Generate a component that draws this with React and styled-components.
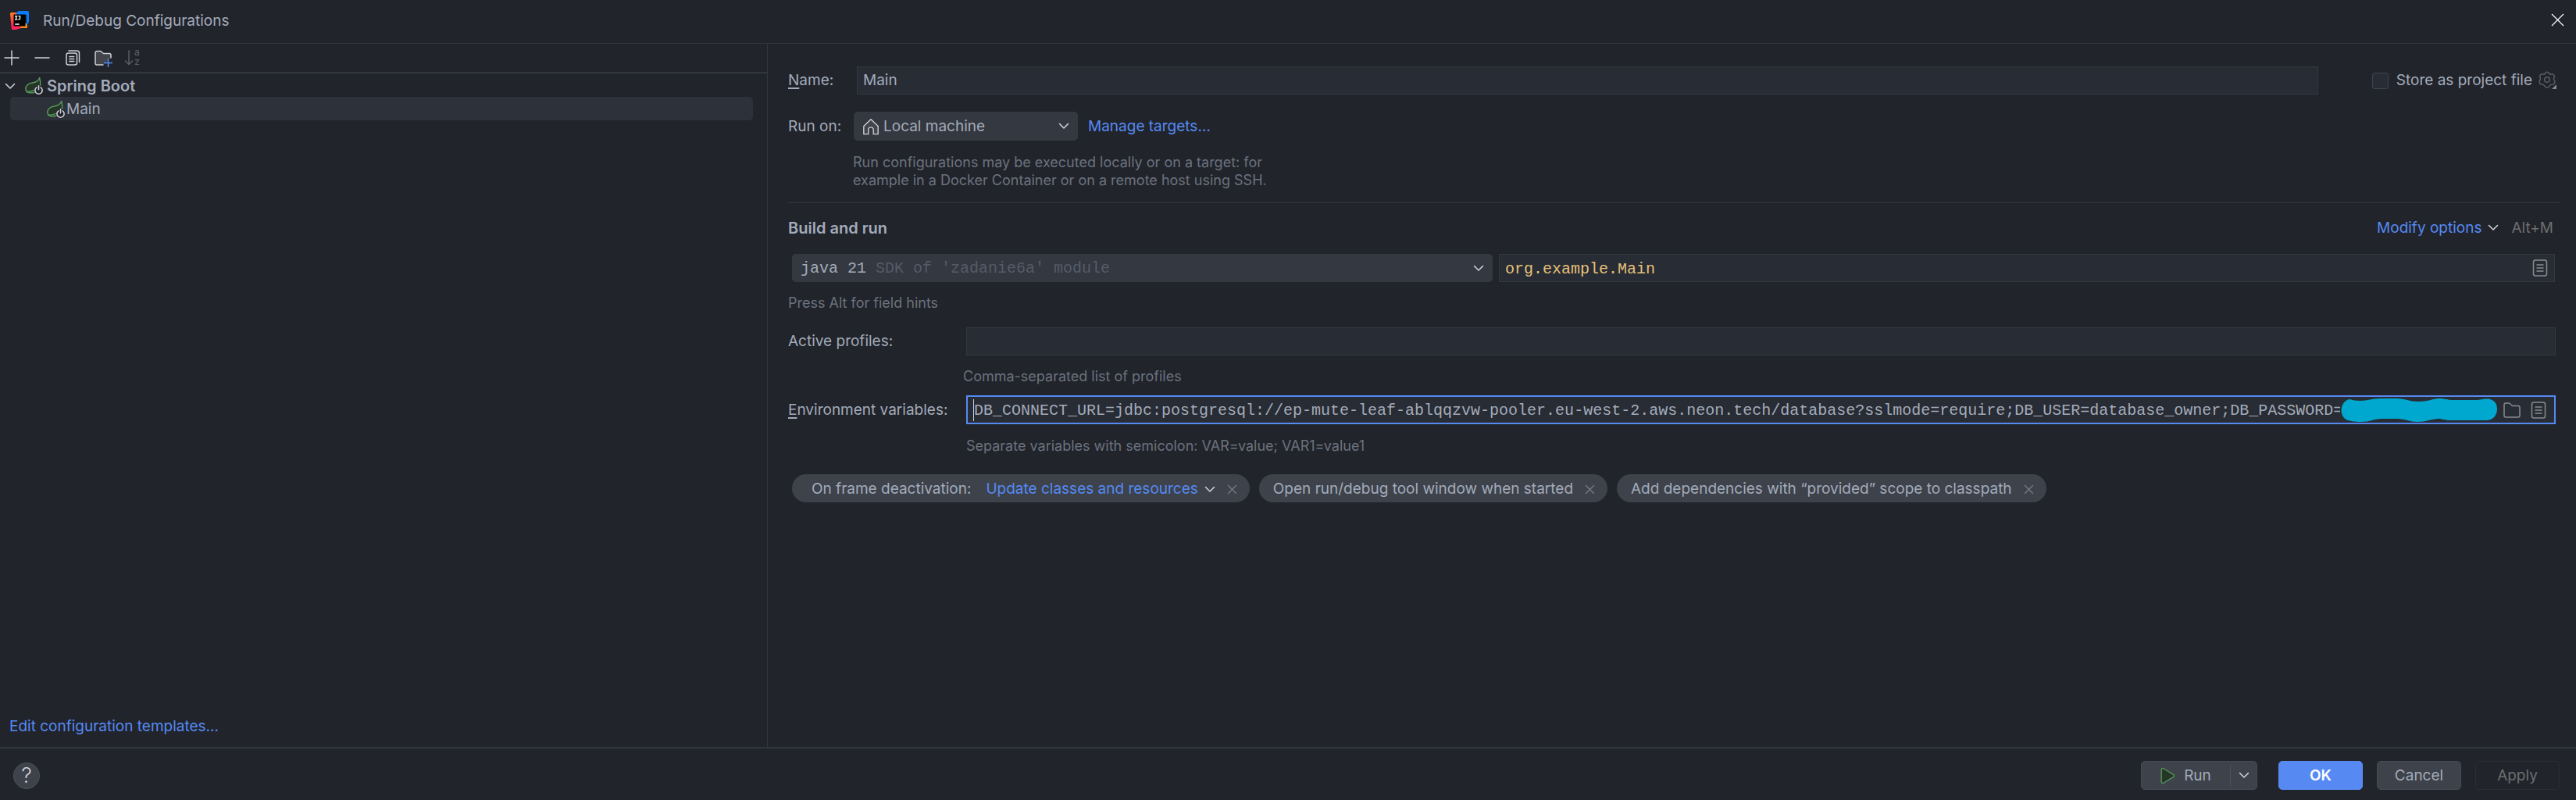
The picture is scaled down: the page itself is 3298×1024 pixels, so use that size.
import React from "react";
import styled, { createGlobalStyle } from "styled-components";

const color = {
  bg: "#21242b",
  line: "#32363e",
  field: "#282c34",
  fieldLine: "#333841",
  control: "#343840",
  chip: "#3d424b",
  selected: "#2d3139",
  text: "#a3abba",
  icon: "#ced0d6",
  muted: "#6c727e",
  faint: "#545b68",
  disabled: "#6e6e6e",
  link: "#568af2",
  accent: "#568af2",
  code: "#e5c07b",
  green: "#57965c",
};

const sans = `Inter, "Liberation Sans", sans-serif`;
const mono = `"Liberation Mono", "DejaVu Sans Mono", monospace`;

const GlobalStyle = createGlobalStyle`
  * { box-sizing: border-box; }
  body {
    margin: 0;
    background: ${color.bg};
    color: ${color.text};
    font: 19px/24px ${sans};
  }
  button, input, select {
    margin: 0;
    padding: 0;
    border: 0;
    background: none;
    color: inherit;
    font: inherit;
    outline: none;
  }
  svg { display: block; flex: none; }
`;

/* ---------- window frame ---------- */

const Dialog = styled.div`
  display: flex;
  flex-direction: column;
  min-height: 100vh;
`;

const TitleBar = styled.header`
  display: flex;
  align-items: center;
  gap: 18px;
  height: 56px;
  padding: 0 15px 4px 13px;
  border-bottom: 1px solid ${color.line};
`;

const Title = styled.h1`
  flex: 1;
  margin: 0;
  padding-top: 2px;
  font-size: 19px;
  font-weight: 400;
`;

const Body = styled.main`
  flex: 1;
  display: grid;
  grid-template-columns: 983px 1fr;
`;

const IconButton = styled.button`
  display: flex;
  align-items: center;
  justify-content: center;
  flex: none;
`;

/* ---------- sidebar ---------- */

const Sidebar = styled.aside`
  display: flex;
  flex-direction: column;
  border-right: 1px solid ${color.line};
`;

const Toolbar = styled.div`
  display: flex;
  align-items: center;
  gap: 15px;
  height: 38px;
  padding-left: 3px;
  border-bottom: 2px solid ${color.line};
`;

const Tree = styled.ul`
  flex: 1;
  margin: 0;
  padding: 0 18px 0 13px;
  list-style: none;
`;

const TreeRow = styled.li`
  display: flex;
  align-items: center;
  gap: ${(p) => (p.$leaf ? 2 : 5)}px;
  height: 30px;
  margin-left: ${(p) => (p.$leaf ? 0 : -9)}px;
  padding-top: 2px;
  padding-left: ${(p) => (p.$leaf ? 46 : 0)}px;
  border-radius: 5px;
  background: ${(p) => (p.$selected ? color.selected : "transparent")};
  font-size: ${(p) => (p.$leaf ? 19 : 20)}px;
  font-weight: ${(p) => (p.$leaf ? 400 : 600)};
`;

const TreeToggle = styled(IconButton)`
  width: 17px;
  margin-right: 5px;
`;

const Link = styled.a`
  color: ${color.link};
  text-decoration: none;
`;

const SidebarFooter = styled.div`
  padding: 0 12px 14px;
`;

/* ---------- form ---------- */

const Form = styled.form`
  display: flex;
  flex-direction: column;
  min-width: 0;
  padding: 29px 21px 0 26px;
`;

const Row = styled.div`
  display: flex;
  align-items: center;
  margin-bottom: ${(p) => p.$after || 0}px;
`;

const Label = styled.label`
  flex: none;
  width: ${(p) => p.$width}px;
  u {
    text-decoration-thickness: 2px;
    text-underline-offset: 3px;
  }
`;

const Field = styled.div`
  flex: 1;
  display: flex;
  align-items: center;
  min-width: 0;
  height: ${(p) => (p.$focused ? 37 : 36)}px;
  margin-left: ${(p) => p.$inset || 0}px;
  margin-right: ${(p) => p.$end || 0}px;
  padding: 0 ${(p) => (p.$focused ? 8 : 6)}px 0 7px;
  border: ${(p) => (p.$focused ? `2px solid ${color.accent}` : `1px solid ${color.fieldLine}`)};
  background: ${color.field};
`;

const TextInput = styled.input`
  flex: 1;
  min-width: 0;
  width: 0;
  height: ${(p) => (p.$mono ? 28 : 24)}px;
  padding-top: ${(p) => (p.$mono ? 2 : 0)}px;
  color: ${(p) => p.$color || color.text};
  font-family: ${(p) => (p.$mono ? mono : sans)};
  font-size: ${(p) => (p.$mono ? 20 : 19)}px;
`;

const Caret = styled.span`
  width: 1px;
  height: 28px;
  background: ${color.icon};
`;

const FieldIcon = styled(IconButton)`
  width: 24px;
  height: 24px;
  margin-left: ${(p) => p.$before || 0}px;
  margin-right: ${(p) => p.$after || 0}px;
`;

const SelectBox = styled.div`
  flex: ${(p) => (p.$width ? "none" : "0 1 897px")};
  width: ${(p) => (p.$width ? `${p.$width}px` : "auto")};
  display: flex;
  align-items: center;
  height: ${(p) => (p.$width ? 37 : 36)}px;
  padding: 0 11px;
  border-radius: 5px;
  background: ${color.control};
`;

const Select = styled.select`
  appearance: none;
  field-sizing: content;
  flex: ${(p) => (p.$fill ? 1 : "none")};
  margin-left: ${(p) => (p.$fill ? 5 : 0)}px;
  padding-top: ${(p) => (p.$mono ? 2 : 0)}px;
  font-family: ${(p) => (p.$mono ? mono : sans)};
  font-size: ${(p) => (p.$mono ? 20 : 19)}px;
  option { background: ${color.control}; }
`;

const SelectHint = styled.span`
  flex: 1;
  margin-left: 12px;
  padding-top: 2px;
  color: ${color.faint};
  font: 20px/24px ${mono};
`;

const Hint = styled.p`
  max-width: ${(p) => p.$max || 900}px;
  margin: 0 0 ${(p) => p.$after}px ${(p) => p.$indent || 0}px;
  color: ${color.muted};
  font-size: 18px;
  line-height: 23px;
`;

const Divider = styled.hr`
  width: 100%;
  height: 1px;
  margin: 0;
  border: 0;
  background: ${color.line};
`;

const SectionTitle = styled.h2`
  flex: 1;
  margin: 0;
  font-size: 20px;
  font-weight: 600;
`;

const ModifyButton = styled.button`
  display: flex;
  align-items: center;
  gap: 8px;
  color: ${color.link};
`;

const Shortcut = styled.span`
  margin: 0 8px 0 16px;
  color: ${color.disabled};
`;

const CheckLabel = styled.label`
  display: flex;
  align-items: center;
  gap: 10px;
`;

const Checkbox = styled.input`
  appearance: none;
  width: 21px;
  height: 21px;
  border: 1px solid #3e4654;
  border-radius: 3px;
  background: ${color.field};
`;

const TargetLink = styled(Link)`
  margin-left: 13px;
`;

const SectionRow = styled(Row)`
  height: 63px;
`;

const JavaRow = styled(Row)`
  gap: 8px;
  padding: 0 6px 0 5px;
`;

const Chips = styled.div`
  display: flex;
  flex-wrap: wrap;
  gap: 12px;
  padding-left: 5px;
`;

const Chip = styled.div`
  display: flex;
  align-items: center;
  height: 36px;
  padding: 2px 16px 0 ${(p) => (p.$wide ? 25 : 18)}px;
  border-radius: 18px;
  background: ${color.chip};
`;

const ChipSelect = styled.span`
  display: flex;
  align-items: center;
  gap: 8px;
  margin-left: 19px;
  color: ${color.link};
`;

const ChipClose = styled(IconButton)`
  margin-left: 15px;
`;

/* ---------- footer ---------- */

const Footer = styled.footer`
  display: flex;
  align-items: center;
  gap: 18px;
  height: 68px;
  padding: 3px 21px 0 17px;
  border-top: 2px solid ${color.line};
`;

const HelpButton = styled.button`
  width: 34px;
  height: 34px;
  margin-right: auto;
  border: 1px solid #4b5059;
  border-radius: 50%;
  background: ${color.chip};
  color: ${color.icon};
  font-size: 27px;
  font-weight: 300;
  line-height: 30px;
`;

const Button = styled.button`
  width: 108px;
  height: 37px;
  border: 1px solid ${(p) => (p.$primary ? color.accent : p.disabled ? "#2b2e35" : "#454b56")};
  border-radius: 5px;
  background: ${(p) => (p.$primary ? color.accent : p.disabled ? "none" : color.chip)};
  color: ${(p) => (p.$primary ? "#ffffff" : p.disabled ? color.disabled : color.text)};
  font-weight: ${(p) => (p.$primary ? 600 : 400)};
`;

const SplitButton = styled.div`
  display: flex;
  align-items: center;
  height: 37px;
  margin-right: 9px;
  border: 1px solid #454b56;
  border-radius: 5px;
  background: ${color.chip};
`;

const RunButton = styled(IconButton)`
  gap: 10px;
  width: 114px;
  height: 28px;
  padding-right: 2px;
  border-right: 1px solid #4d535e;
`;

const RunMenu = styled(IconButton)`
  width: 33px;
  height: 28px;
`;

/* ---------- icons ---------- */

const Icon = ({ size = 24, children, stroke = color.icon }) => (
  <svg
    width={size}
    height={size}
    viewBox="0 0 24 24"
    fill="none"
    stroke={stroke}
    strokeWidth="1.5"
    strokeLinecap="round"
    strokeLinejoin="round"
    aria-hidden="true"
  >
    {children}
  </svg>
);

const Chevron = () => (
  <svg width="14" height="9" viewBox="0 0 14 9" fill="none" stroke={color.icon} strokeWidth="1.6" strokeLinecap="round" strokeLinejoin="round" aria-hidden="true">
    <path d="M1.5 1.5 7 7l5.5-5.5" />
  </svg>
);

const Cross = () => (
  <svg width="13" height="13" viewBox="0 0 13 13" fill="none" stroke="#747a86" strokeWidth="1.4" strokeLinecap="round" aria-hidden="true">
    <path d="M1.5 1.5l10 10M11.5 1.5l-10 10" />
  </svg>
);

const Logo = () => (
  <svg width="24" height="24" viewBox="0 0 24 24" aria-hidden="true">
    <defs>
      <linearGradient id="warm" x1="0" y1="0" x2="0.3" y2="1">
        <stop offset="0" stopColor="#ff8a1c" />
        <stop offset="0.45" stopColor="#ff4a3d" />
        <stop offset="0.75" stopColor="#ff2457" />
      </linearGradient>
    </defs>
    <path d="M0 3.5Q0 2 1.500 2H14v20l-5 1.600Q8 24 7 24H3.500Q2 24 1.800 22.500z" fill="url(#warm)" />
    <path d="M14 16h8v4.500Q22 22 20.500 22H13z" fill="#ff8a1c" />
    <path d="M9 1.500Q9.800 0 11.500 0H22.500Q24 0 24 1.500V14l-3 5V5H7z" fill="#087cfa" />
    <rect x="4.500" y="4.500" width="15" height="15" fill="#000" />
    <g fill="none" stroke="#fff" strokeWidth="1.300">
      <path d="M6 6.600h3.400M7.700 6.600v4.200M6 10.800h3.400M10.600 6.600h2v3q0 1.500-2.200 1.300M6.200 17h5.600" />
    </g>
  </svg>
);

const SpringBoot = () => (
  <svg width="24" height="24" viewBox="0 0 24 24" fill="none" aria-hidden="true">
    <path
      d="M19.600 1.500C18.300 5.800 15 7.400 10.500 8 5 8.700 1.800 12 1.800 15.500c0 3.500 2 5.300 6 5.300 4 0 8-.5 10.500-3.600 3-3.700 3-9.200 1.300-15.700z"
      fill="#253627"
      stroke={color.green}
      strokeWidth="1.500"
      strokeLinejoin="round"
    />
    <path d="M2.500 19c4.500.5 8.500-.2 11.500-3" stroke={color.green} strokeWidth="1.400" />
    <circle cx="18.500" cy="17.500" r="6.200" fill={color.bg} />
    <path d="M15.800 13.900a4.600 4.600 0 1 0 5.400 0M18.500 11.800v5" stroke={color.icon} strokeWidth="1.600" strokeLinecap="round" />
  </svg>
);

const PlusIcon = () => <Icon><path d="M12 3v18M3 12h18" /></Icon>;
const MinusIcon = () => <Icon><path d="M3 12h18" /></Icon>;

const CopyIcon = () => (
  <Icon>
    <rect x="4" y="6" width="13.500" height="15" rx="2.500" />
    <path d="M7 3h10.500a3 3 0 0 1 3 3v11.500M7.800 10.500h6M7.800 13.500h6M7.800 16.500h6" />
  </Icon>
);

const NewFolderIcon = () => (
  <Icon>
    <path d="M12 21H4a2 2 0 0 1-2-2V5.500a2 2 0 0 1 2-2h5l3.500 3H20a2 2 0 0 1 2 2V12" fill="#43454a" />
    <path d="M18.500 13.500v10M13.500 18.500h10" stroke="#548af7" />
  </Icon>
);

const SortLetters = styled.span`
  display: flex;
  flex-direction: column;
  padding-bottom: 3px;
  font-size: 12px;
  line-height: 12px;
  font-weight: 500;
`;

const SortButton = styled(IconButton)`
  gap: 1px;
  color: #5a5d63;
`;

const SortArrow = () => (
  <svg width="12" height="20" viewBox="0 0 12 20" fill="none" stroke="#5a5d63" strokeWidth="1.500" strokeLinecap="round" strokeLinejoin="round" aria-hidden="true">
    <path d="M6 1v17.500M1.500 14 6 18.500l4.500-4.500" />
  </svg>
);

const HomeIcon = () => (
  <Icon size={22}>
    <path d="M2 11.500 12 2l10 9.500V22.500H15.500V16.500a3.500 3.500 0 0 0-7 0v6H2z" fill="#43454a" />
  </Icon>
);

const FolderIcon = () => (
  <Icon stroke="#868a91">
    <path d="M4 3H8.500l4 3.500h7.500a2 2 0 0 1 2 2V19a2 2 0 0 1-2 2H4a2 2 0 0 1-2-2V5a2 2 0 0 1 2-2z" />
  </Icon>
);

const ListIcon = () => (
  <Icon stroke="#868a91">
    <rect x="3.500" y="2" width="17" height="20" rx="2.500" />
    <path d="M8 8h8M8 12h8M8 16h8" />
  </Icon>
);

const GearIcon = () => (
  <Icon stroke="#5a5d63">
    <path d="M9 2Q11 .4 13 2L14.200 4 17.500 3.800Q19.500 4 20.600 6.500L19.600 9Q19.200 11 20.800 12.800 21.200 14.800 19 17L16.200 17.200Q14.500 17.800 13.500 20 11 22 8.500 20 7.500 17.800 5.800 17.200L3 17Q.8 14.800 1.200 12.800 2.800 11 2.400 9L1.400 6.500Q2.500 4 4.500 3.800L7.800 4z" />
    <circle cx="11" cy="11" r="3.300" />
    <path d="M23 17v6h-6z" fill="#868a91" stroke="none" />
  </Icon>
);

const PlayIcon = () => (
  <Icon size={22} stroke={color.green}>
    <path d="M3.500 3.500a2 2 0 0 1 3-1.600l14 8.600a1.800 1.800 0 0 1 0 3l-14 8.600a2 2 0 0 1-3-1.600z" fill="#253627" />
  </Icon>
);

const Redaction = () => (
  <svg width="202" height="32" viewBox="0 0 202 32" aria-hidden="true">
    <path
      d="M12 2c4 1 8 2 14 2 10 0 14-3 26-3h20c12 0 16 4 28 4 12 0 16-3 26-4 8 0 10 2 20 2h30c6-1 12-2 16-1 7 2 9 7 9 13s-4 13-12 14h-47c-8 0-12-2-16-2-8 0-16 4-27 4-10 0-16-4-26-4H54c-12 0-14 4-28 4-8 0-12-1-16-2C-2 25-1 5 12 2z"
      fill="#00a8cf"
    />
  </svg>
);

const RemovableChip = ({ children, name, wide }) => (
  <Chip $wide={wide}>
    {children}
    <ChipClose type="button" aria-label={`Remove ${name}`}><Cross /></ChipClose>
  </Chip>
);

const ENV_VALUE =
  "DB_CONNECT_URL=jdbc:postgresql://ep-mute-leaf-ablqqzvw-pooler.eu-west-2.aws.neon.tech/database?sslmode=require;DB_USER=database_owner;DB_PASSWORD=";

export default function App() {
  return (
    <>
      <GlobalStyle />
      <Dialog>
        <TitleBar>
          <Logo />
          <Title>Run/Debug Configurations</Title>
          <IconButton aria-label="Close">
            <svg width="17" height="17" viewBox="0 0 17 17" stroke="#fff" strokeWidth="1.200" aria-hidden="true">
              <path d="M1 1l15 15M16 1L1 16" />
            </svg>
          </IconButton>
        </TitleBar>

        <Body>
          <Sidebar>
            <Toolbar>
              <IconButton aria-label="Add"><PlusIcon /></IconButton>
              <IconButton aria-label="Remove"><MinusIcon /></IconButton>
              <IconButton aria-label="Copy"><CopyIcon /></IconButton>
              <IconButton aria-label="New folder"><NewFolderIcon /></IconButton>
              <SortButton aria-label="Sort">
                <SortArrow />
                <SortLetters><span>a</span><span>z</span></SortLetters>
              </SortButton>
            </Toolbar>
            <Tree>
              <TreeRow>
                <TreeToggle aria-label="Collapse"><Chevron /></TreeToggle>
                <SpringBoot />
                Spring Boot
              </TreeRow>
              <TreeRow $leaf $selected>
                <SpringBoot />
                Main
              </TreeRow>
            </Tree>
            <SidebarFooter>
              <Link href="#templates">Edit configuration templates…</Link>
            </SidebarFooter>
          </Sidebar>

          <Form>
            <Row $after={22}>
              <Label htmlFor="name" $width={84}><u>N</u>ame:</Label>
              <Field $inset={4} $end={69}>
                <TextInput id="name" defaultValue="Main" />
              </Field>
              <CheckLabel>
                <Checkbox type="checkbox" />
                Store as project file
              </CheckLabel>
              <FieldIcon type="button" aria-label="Storage settings" $before={8} $after={3}><GearIcon /></FieldIcon>
            </Row>

            <Row $after={16}>
              <Label htmlFor="target" $width={84}>Run on:</Label>
              <SelectBox $width={287}>
                <HomeIcon />
                <Select id="target" $fill>
                  <option>Local machine</option>
                </Select>
                <Chevron />
              </SelectBox>
              <TargetLink href="#targets">Manage targets…</TargetLink>
            </Row>

            <Hint $indent={83} $max={560} $after={17}>
              Run configurations may be executed locally or on a target: for
              <br />
              example in a Docker Container or on a remote host using SSH.
            </Hint>

            <Divider />

            <SectionRow $after={2}>
              <SectionTitle>Build and run</SectionTitle>
              <ModifyButton type="button">Modify options<Chevron /></ModifyButton>
              <Shortcut>Alt+M</Shortcut>
            </SectionRow>

            <JavaRow $after={15}>
              <SelectBox>
                <Select $mono aria-label="Java runtime">
                  <option>java 21</option>
                </Select>
                <SelectHint>SDK of 'zadanie6a' module</SelectHint>
                <Chevron />
              </SelectBox>
              <Field>
                <TextInput $mono $color={color.code} aria-label="Main class" defaultValue="org.example.Main" />
                <FieldIcon type="button" aria-label="Browse classes"><ListIcon /></FieldIcon>
              </Field>
            </JavaRow>

            <Hint $after={20}>Press Alt for field hints</Hint>

            <Row $after={15}>
              <Label htmlFor="profiles" $width={228}>Active profiles:</Label>
              <Field $end={5}>
                <TextInput id="profiles" />
              </Field>
            </Row>
            <Hint $indent={224} $after={13}>Comma-separated list of profiles</Hint>

            <Row $after={16}>
              <Label htmlFor="env" $width={228}><u>E</u>nvironment variables:</Label>
              <Field $focused $end={5}>
                <Caret />
                <TextInput $mono id="env" defaultValue={ENV_VALUE} />
                <Redaction />
                <FieldIcon type="button" aria-label="Browse" $before={6}><FolderIcon /></FieldIcon>
                <FieldIcon type="button" aria-label="Edit variables" $before={10}><ListIcon /></FieldIcon>
              </Field>
            </Row>
            <Hint $indent={228} $after={25}>Separate variables with semicolon: VAR=value; VAR1=value1</Hint>

            <Chips>
              <RemovableChip wide name="frame deactivation">
                <label htmlFor="deactivation">On frame deactivation:</label>
                <ChipSelect>
                  <Select id="deactivation">
                    <option>Update classes and resources</option>
                  </Select>
                  <Chevron />
                </ChipSelect>
              </RemovableChip>
              <RemovableChip name="tool window">Open run/debug tool window when started</RemovableChip>
              <RemovableChip name="provided scope">Add dependencies with “provided” scope to classpath</RemovableChip>
            </Chips>
          </Form>
        </Body>

        <Footer>
          <HelpButton aria-label="Help">?</HelpButton>
          <SplitButton>
            <RunButton><PlayIcon />Run</RunButton>
            <RunMenu aria-label="More run options"><Chevron /></RunMenu>
          </SplitButton>
          <Button $primary>OK</Button>
          <Button>Cancel</Button>
          <Button disabled>Apply</Button>
        </Footer>
      </Dialog>
    </>
  );
}
